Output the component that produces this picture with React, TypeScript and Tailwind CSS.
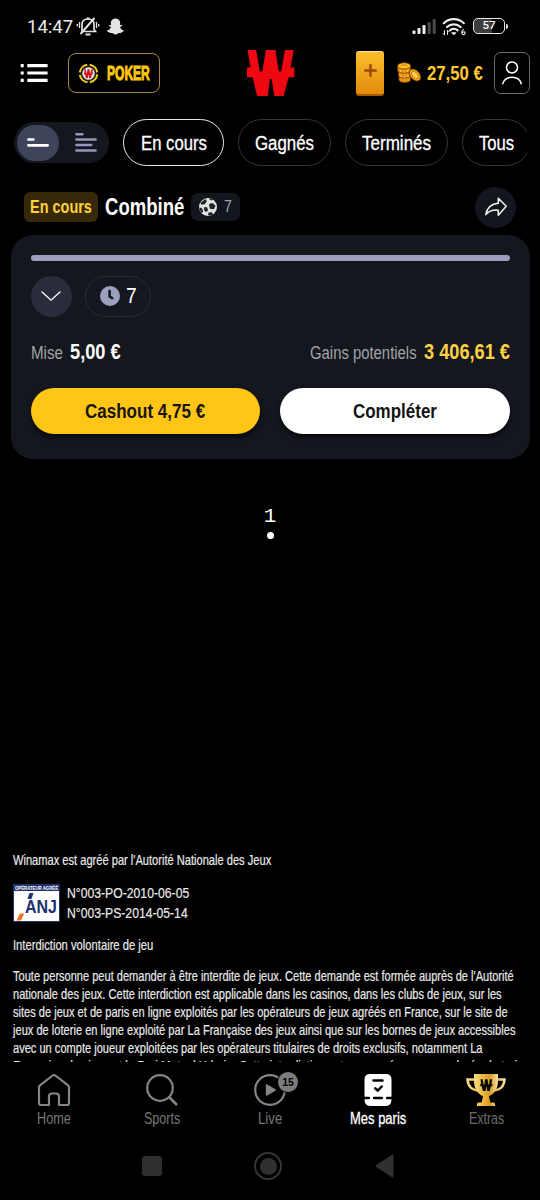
import { useLayoutEffect, useRef, useState } from 'react';
import clsx from 'clsx';
import { FaSnapchatGhost } from 'react-icons/fa';

type CondensedProps = {
  width: number;
  className?: string;
  children: string;
};

// Condensed text: squeezes a regular face horizontally into the given width
function Condensed({ width, className, children }: CondensedProps) {
  const ref = useRef<HTMLSpanElement>(null);
  const [scale, setScale] = useState(0.82);

  useLayoutEffect(() => {
    if (ref.current) setScale(width / ref.current.offsetWidth);
  }, [width, children]);

  return (
    <span className={clsx('block shrink-0 whitespace-nowrap', className)} style={{ width }}>
      <span
        ref={ref}
        className="inline-block origin-left"
        style={{ transform: `scaleX(${scale})` }}
      >
        {children}
      </span>
    </span>
  );
}

const W_PATH =
  'M.5 0H9.2L12.800 21.500H15.400L18.800 0H28.400L31.800 21.500H34.200L38 0H46.700L43.500 17.500H47.300V27.200H41.600L36.700 46H27.300L24.600 29H23L20.700 46H10L5.700 27.200H0V17.500H3.500Z';

function StatusBar() {
  return (
    <div className="flex h-[46px] items-start pt-[14px] pr-[32px] pl-[27px]">
      <Condensed
        width={46}
        className="font-[Roboto,sans-serif] text-[18.5px] leading-[26px] text-[#ececec]"
      >
        14:47
      </Condensed>
      <svg className="mt-[2px] ml-[3px]" width="24" height="21" viewBox="0 0 24 21" fill="none" stroke="#e4e4e4" strokeWidth="1.7">
        <path d="M6 15.5V8.5C6 5 8.2 3 12 3s6 2 6 5.500v5l1.500 2H5" />
        <path d="M10.500 2.500h3M9.500 18.500h5M4.500 18 18.500 2" strokeWidth="1.900" />
        <path d="M3.500 6v6M1.300 8v2.500M20.500 6v6M22.700 8v2.500" strokeWidth="1.300" />
      </svg>
      <FaSnapchatGhost className="mt-[4px] ml-[7px] text-[#e4e4e4]" size={17} />
      <svg className="mt-[4px] ml-auto" width="24" height="17" viewBox="0 0 24 17">
        <rect x="0.500" y="12.500" width="3" height="3.500" rx=".8" fill="#ececec" />
        <rect x="5.500" y="10" width="3" height="6" rx=".8" fill="#ececec" />
        <rect x="10.500" y="7" width="3" height="9" rx=".8" fill="#ececec" />
        <rect x="15.700" y="4" width="3" height="12" rx=".8" fill="#4a4a4a" />
        <rect x="20.700" y="1" width="3" height="15" rx=".8" fill="#4a4a4a" />
      </svg>
      <svg className="mt-[3px] ml-[6px]" width="24" height="19" viewBox="0 0 24 19" fill="none" stroke="#ececec" strokeLinecap="round">
        <path d="M1.800 6.200a14.500 14.500 0 0 1 20 0M5 10a10 10 0 0 1 13.600 0M8 13.300a5.800 5.800 0 0 1 7.600 0" strokeWidth="2.200" />
        <path d="m10 16 1.800 1.800L13.600 16Z" fill="#ececec" strokeWidth="1" />
        <path d="M2.500 13.500v4M1.200 16.500l1.300 1.300M5.500 17.500v-4M6.700 14.800l-1.200-1.300" strokeWidth="1" />
        <path d="M21.500 12.500c-2 .8-2.500 4.500-.5 5s3-2.500 1-2.700c-1 0-1.800.5-2 1.200" strokeWidth="1.100" />
      </svg>
      <div className="mt-[4px] ml-[7px] flex h-4 w-8 items-center justify-center rounded-[5px] border-[1.500px] border-[#e8e8e8] bg-linear-to-r from-[#3c3c3c] from-58% to-black to-60%">
        <span className="font-[Roboto,sans-serif] text-[11.500px] leading-none font-medium text-white">57</span>
      </div>
      <div className="mt-[10px] ml-px h-[5px] w-[2px] rounded-r bg-[#e8e8e8]" />
    </div>
  );
}

function Coins() {
  return (
    <svg className="ml-[13px] shrink-0" width="25" height="22" viewBox="0 0 25 22" stroke="#7a3d00" strokeWidth=".8">
      <g fill="#e69613">
        <path d="M2 14v4c0 3.300 11.500 3.300 11.500 0v-4" />
        <path d="M1.500 9v4.500c0 3.300 12 3.300 12 0V9" />
        <path d="M.7 4v4.500c0 3.500 12.800 3.500 12.800 0V4" />
        <ellipse cx="7.200" cy="3.900" rx="6.500" ry="3.100" fill="#ffc22e" />
        <path d="M12 10c-1 3 5 9.500 8.500 9l3-2" />
        <ellipse cx="18" cy="13" rx="6.800" ry="4.500" transform="rotate(48 18 13)" fill="#f9b120" />
        <ellipse cx="18" cy="13" rx="4.500" ry="2.600" transform="rotate(48 18 13)" fill="#ffd050" stroke="#b86600" />
      </g>
      <path d="M3.500 8v2.200M7 8.800V11M10.500 8v2.200M4 13v2.200M7.500 13.600v2.200M11 12.800V15" stroke="#fdd36a" />
      <path d="M4 4c2-1.500 4.500-1.500 6.500 0" stroke="#b86600" fill="none" />
    </svg>
  );
}

function Header() {
  return (
    <header className="flex h-[54px] items-center pr-[10px] pl-5">
      <svg width="28" height="20" viewBox="0 0 28 20" fill="#fff">
        <path d="M.7 1h3v3.200h-3zM7.300 1h20.300v3.200H7.300zM.7 8.400h3v3.200h-3zM7.300 8.400h20.300v3.200H7.300zM.7 15.800h3V19h-3zM7.300 15.800h20.300V19H7.300z" />
      </svg>
      <button className="ml-5 flex h-10 w-[92px] items-center rounded-lg border border-[#a5873f] pl-[9px]">
        <svg className="shrink-0" width="21" height="21" viewBox="0 0 21 21">
          <circle cx="10.500" cy="10.500" r="8.800" fill="#181818" stroke="#f5d21c" strokeWidth="2" strokeDasharray="11.300 2.500" strokeDashoffset="-1" />
          <circle cx="10.500" cy="10.500" r="6.300" fill="#e6dedd" />
          <path d={W_PATH} fill="#d3131b" transform="translate(6 6.200) scale(.19)" />
        </svg>
        <Condensed
          width={43}
          className="ml-[8px] text-[21px] leading-6 font-bold text-[#fdc70d] [-webkit-text-stroke:1.1px_#fdc70d]"
        >
          POKER
        </Condensed>
      </button>
      <svg className="ml-[87px] shrink-0" width="48" height="46" viewBox="0 0 48 46" fill="#ed0812">
        <path d={W_PATH} />
      </svg>
      <div className="ml-[61px] flex h-[45px] w-7 shrink-0 items-center justify-center rounded-[3px] border-t border-b-2 border-t-[#ffe28a] border-b-[#a55a00] bg-linear-to-b from-[#fdbe2c] to-[#e28a0a]">
        <svg className="-mt-1" width="13" height="13" viewBox="0 0 13 13" stroke="#9c4a08" strokeWidth="2.400">
          <path d="M6.500 .2v12.600M.2 6.500h12.600" />
        </svg>
      </div>
      <Coins />
      <Condensed width={56} className="ml-[5px] text-[20px] leading-6 font-bold text-[#ffc92e]">
        27,50 €
      </Condensed>
      <button className="ml-[11px] flex h-[42px] w-9 shrink-0 items-center justify-center rounded-[7px] border border-[#6a6a6c]">
        <svg width="22" height="26" viewBox="0 0 22 26" fill="none" stroke="#fff" strokeWidth="1.500">
          <circle cx="11" cy="7.500" r="5.500" />
          <path d="M1.500 24.200C3 19 7 17.300 11 17.300s8 1.700 9.500 6.900" />
        </svg>
      </button>
    </header>
  );
}

const tabs = [
  { label: 'En cours', text: 66, box: 'w-[101px]', active: true },
  { label: 'Gagnés', text: 59, box: 'w-[93px]' },
  { label: 'Terminés', text: 69, box: 'w-[103px]' },
  { label: 'Tous', text: 35, box: 'w-[68px]' }
];

function Filters() {
  return (
    <div className="mt-[19px] mr-[13px] ml-[14px] flex h-[47px] items-center gap-[14px] overflow-hidden">
      <div className="flex h-[41px] w-[95px] shrink-0 items-center rounded-full bg-[#15171f] pl-[3px]">
        <div className="flex h-9 w-[42px] items-center justify-center rounded-full bg-[#3e445a]">
          <svg width="22" height="9" viewBox="0 0 22 9" stroke="#fff" strokeWidth="2.700" strokeLinecap="round">
            <path d="M1.400 1.500h5M1.400 7.300h19.200" />
          </svg>
        </div>
        <svg className="ml-4" width="22" height="19" viewBox="0 0 22 19" stroke="#9596bc" strokeWidth="2.500" strokeLinecap="round">
          <path d="M1.400 1.300h6M1.400 6.600h19.200M1.400 12h14.800M1.400 17.400h19.200" />
        </svg>
      </div>
      {tabs.map((tab) => (
        <button
          key={tab.label}
          className={clsx(
            'flex h-[47px] shrink-0 items-center justify-center rounded-full border',
            tab.box,
            tab.active ? 'border-[#e8e8e8]' : 'border-[#343437]'
          )}
        >
          <Condensed width={tab.text} className="text-[20px] leading-6 text-white [-webkit-text-stroke:0.3px_#fff]">
            {tab.label}
          </Condensed>
        </button>
      ))}
    </div>
  );
}

function Football() {
  return (
    <svg width="18" height="18" viewBox="0 0 18 18">
      <circle cx="9" cy="9" r="9" fill="#e3e5e3" />
      <g fill="#20252a">
        <path d="m10 6 3.800-1 2.700 2.700-1.500 3.600-4.200-.6ZM1.500 4.700 6.500 1l1.300 2.300-2 3-3.500.5ZM.2 9.500l2.500.5 1.600 3.200-1.500 2Q.4 12.500.2 9.500ZM5.500 9l2.500.3 1.200 3-2.200 2-2.300-2.500ZM9.500 14.500l3.500-.3 1.200 2-3 1.500-2.200-.7ZM11 .3l3 1.300-1.600 1-2-1Z" />
      </g>
    </svg>
  );
}

function BetTitle() {
  return (
    <div className="mt-5 flex h-[42px] items-center pr-6 pl-6">
      <div className="flex h-[30px] w-[74px] items-center justify-center rounded-[6px] bg-[#362808]">
        <Condensed width={62} className="text-[17.500px] leading-5 font-bold text-[#ffd13d]">
          En cours
        </Condensed>
      </div>
      <Condensed width={79} className="ml-[7px] text-[23px] leading-7 font-bold text-white">
        Combiné
      </Condensed>
      <div className="ml-[7px] flex h-7 w-[49px] items-center rounded-[7px] bg-[#14161e] pl-[8px]">
        <Football />
        <Condensed width={7.500} className="ml-[7px] text-[17px] leading-5 text-[#a3a3a8]">
          7
        </Condensed>
      </div>
      <button className="ml-auto flex size-[41px] items-center justify-center rounded-full bg-[#14161e]">
        <svg width="24" height="22" viewBox="0 0 24 22" fill="none" stroke="#f4f4f4" strokeWidth="1.500" strokeLinejoin="round">
          <path d="M14.300 2.200 22.200 10.300 14.300 19.300V14.200C8.800 13.700 4.800 15 1.800 18.600 3 11.500 7.200 7.800 14.300 7.200Z" />
        </svg>
      </button>
    </div>
  );
}

function BetCard() {
  return (
    <section className="mt-[7px] mr-[10px] ml-[10.500px] h-[224px] shrink-0 rounded-[22px] bg-[#15171f] px-5 pt-5">
      <div className="h-[6px] rounded-full bg-[#9c9fbd]" />
      <div className="mt-[14px] flex h-[42px] items-center gap-[13px]">
        <button className="flex size-[41px] items-center justify-center rounded-full bg-[#292d3b]">
          <svg width="20" height="12" viewBox="0 0 20 12" fill="none" stroke="#fff" strokeWidth="1.300" strokeLinecap="round">
            <path d="m1 2 9 8.200L19 2" />
          </svg>
        </button>
        <div className="flex h-[41px] w-[66px] items-center rounded-full border border-[#292b33] pl-[14px]">
          <svg width="20" height="20" viewBox="0 0 20 20" fill="none">
            <circle cx="10" cy="10" r="10" fill="#9c9fbd" />
            <path d="M9.600 5v5.500l2.600 1.600" stroke="#15171f" strokeWidth="2.600" strokeLinecap="round" strokeLinejoin="round" />
          </svg>
          <Condensed width={10.500} className="ml-[6px] text-[22px] leading-6 text-white">
            7
          </Condensed>
        </div>
      </div>
      <div className="mt-[21px] flex h-7 items-baseline justify-between">
        <div className="flex items-baseline gap-[7px]">
          <Condensed width={32} className="text-[17.500px] leading-7 text-[#a2a2a7]">
            Mise
          </Condensed>
          <Condensed width={50.500} className="text-[22px] leading-7 font-bold text-white">
            5,00 €
          </Condensed>
        </div>
        <div className="flex items-baseline gap-[7px]">
          <Condensed width={107} className="text-[17.500px] leading-7 text-[#a2a2a7]">
            Gains potentiels
          </Condensed>
          <Condensed width={86} className="text-[22px] leading-7 font-bold text-[#ffd147]">
            3 406,61 €
          </Condensed>
        </div>
      </div>
      <div className="mt-[22px] grid grid-cols-2 gap-5">
        <button className="flex h-[46px] items-center justify-center rounded-full bg-[#ffc517] shadow-md shadow-black/60">
          <Condensed width={120} className="text-[20px] leading-6 font-bold text-[#151515]">
            Cashout 4,75 €
          </Condensed>
        </button>
        <button className="flex h-[46px] items-center justify-center rounded-full bg-white shadow-md shadow-black/60">
          <Condensed width={84} className="text-[20px] leading-6 font-bold text-[#151515]">
            Compléter
          </Condensed>
        </button>
      </div>
    </section>
  );
}

const legalLines = [
  { width: 500.500, text: "Toute personne peut demander à être interdite de jeux. Cette demande est formée auprès de l'Autorité" },
  { width: 488.500, text: 'nationale des jeux. Cette interdiction est applicable dans les casinos, dans les clubs de jeux, sur les' },
  { width: 494.500, text: 'sites de jeux et de paris en ligne exploités par les opérateurs de jeux agréés en France, sur le site de' },
  { width: 502.500, text: 'jeux de loterie en ligne exploité par La Française des jeux ainsi que sur les bornes de jeux accessibles' },
  { width: 469.500, text: 'avec un compte joueur exploitées par les opérateurs titulaires de droits exclusifs, notamment La' },
  { width: 510, text: 'Française des jeux et le Pari Mutuel Urbain. Cette interdiction est prononcée pour une durée de trois' }
];

function Legal() {
  return (
    <section className="mt-auto h-[212px] shrink-0 overflow-hidden pt-px pl-[13px] text-[14.500px] leading-[18px] text-[#e9e9e9] [-webkit-text-stroke:0.2px_#e9e9e9]">
      <Condensed width={258}>Winamax est agréé par l'Autorité Nationale des Jeux</Condensed>
      <div className="mt-[14px] flex h-[40px] items-center">
        <div className="flex h-[38px] w-[47px] flex-col border border-[#20336e] bg-white [-webkit-text-stroke:0]">
          <div className="flex h-[6px] items-center justify-center bg-[#20336e]">
            <Condensed width={43} className="text-[5px] leading-[6px] font-bold text-white">
              OPÉRATEUR AGRÉÉ
            </Condensed>
          </div>
          <div className="flex h-[30px] items-end pl-[2px]">
            <svg width="9" height="28" viewBox="0 0 9 28">
              <path d="M3.700 20.500h4.500L5 27.500H.5Z" fill="#e97529" />
            </svg>
            <div className="flex flex-col">
              <svg className="ml-[2px]" width="7" height="7" viewBox="0 0 7 7">
                <path d="M2.500 0H6.500L4.500 6H.5Z" fill="#20336e" />
              </svg>
              <Condensed width={32} className="mb-[6px] text-[18px] leading-[15px] font-bold text-[#20336e]">
                ANJ
              </Condensed>
            </div>
          </div>
        </div>
        <div className="ml-[7px] text-[15px] leading-5">
          <Condensed width={122}>N°003-PO-2010-06-05</Condensed>
          <Condensed width={121}>N°003-PS-2014-05-14</Condensed>
        </div>
      </div>
      <Condensed width={140} className="mt-[13px]">
        Interdiction volontaire de jeu
      </Condensed>
      <div className="mt-[13px]">
        {legalLines.map((line) => (
          <Condensed key={line.text} width={line.width}>
            {line.text}
          </Condensed>
        ))}
      </div>
    </section>
  );
}

function HomeIcon() {
  return (
    <svg width="34" height="34" viewBox="0 0 34 34" fill="none" stroke="#858585" strokeWidth="2.200" strokeLinejoin="round">
      <path d="M2 14 Q2 13 3 12.300L15.600 2.500Q17 1.500 18.400 2.500L31 12.300Q32 13 32 14V30Q32 32 30 32H22V23.500Q22 20.500 19 20.500H15Q12 20.500 12 23.500V32H4Q2 32 2 30Z" />
    </svg>
  );
}

function SearchIcon() {
  return (
    <svg width="34" height="34" viewBox="0 0 34 34" fill="none" stroke="#858585" strokeWidth="2.200">
      <circle cx="15" cy="15" r="12.800" />
      <path d="m24 24 8 8" strokeWidth="2.700" />
    </svg>
  );
}

function LiveIcon() {
  return (
    <div className="relative">
      <svg width="34" height="34" viewBox="0 0 34 34">
        <circle cx="17" cy="17" r="14.800" fill="none" stroke="#858585" strokeWidth="2.200" />
        <path d="M12.800 12.500Q12.800 10.800 14.300 11.600L22.500 16.200Q23.800 17 22.500 17.800L14.300 22.400Q12.800 23.200 12.800 21.500Z" fill="#858585" />
      </svg>
      <span className="absolute -top-[2px] left-[24px] flex size-[22px] items-center justify-center rounded-full border border-black bg-[#7c7c7c] text-[10.500px] leading-none font-bold text-black">
        15
      </span>
    </div>
  );
}

function TicketIcon() {
  return (
    <svg width="34" height="34" viewBox="0 0 34 34" fill="none">
      <path d="M9 1H25Q30.500 1 30.500 6.500V23.300Q29 25 30.500 26.500Q30.500 33 25 33H9Q3.500 33 3.500 26.500Q5 25 3.500 23.300V6.500Q3.500 1 9 1Z" fill="#fff" />
      <path d="M12.500 7.500h9M14.300 15.300l2.400 2.400 4-4.200" stroke="#000" strokeWidth="2.500" strokeLinecap="round" strokeLinejoin="round" />
      <path d="M3 25H8M13 25h8M26 25h5" stroke="#000" strokeWidth="2.300" strokeLinecap="round" />
    </svg>
  );
}

function TrophyIcon() {
  return (
    <svg width="40" height="34" viewBox="0 0 40 34">
      <defs>
        <linearGradient id="gold" x1="0" y1="0" x2="1" y2="0">
          <stop offset="0" stopColor="#f8da8c" />
          <stop offset=".35" stopColor="#eebb42" />
          <stop offset=".65" stopColor="#d99b22" />
          <stop offset="1" stopColor="#f9dfa0" />
        </linearGradient>
      </defs>
      <path d="M9 6.500H1.500C2 14 6 17 12.500 17.500M31 6.500h7.500C38 14 34 17 27.500 17.500" fill="none" stroke="url(#gold)" strokeWidth="2.500" />
      <path d="M8 1H32V8C32 16 28 21 23 23.300L24.300 29.500H27.500Q29 29.500 29 31V33H11V31Q11 29.500 12.500 29.500H15.700L17 23.300C12 21 8 16 8 8Z" fill="url(#gold)" />
      <path d={W_PATH} fill="#090909" transform="translate(14.300 6.300) scale(.255)" />
    </svg>
  );
}

const navItems = [
  { label: 'Home', width: 34, color: 'text-[#777]', icon: <HomeIcon /> },
  { label: 'Sports', width: 36, color: 'text-[#777]', icon: <SearchIcon /> },
  { label: 'Live', width: 24, color: 'text-[#777]', icon: <LiveIcon /> },
  { label: 'Mes paris', width: 56, color: 'text-white [-webkit-text-stroke:0.3px_#fff]', icon: <TicketIcon /> },
  { label: 'Extras', width: 35, color: 'text-[#6c6f68]', icon: <TrophyIcon /> }
];

function BottomNav() {
  return (
    <nav className="grid h-[74px] shrink-0 grid-cols-5 bg-black pt-[11px]">
      {navItems.map((item) => (
        <a key={item.label} className="flex flex-col items-center">
          {item.icon}
          <Condensed width={item.width} className={clsx('mt-[3px] text-[16px] leading-[18px]', item.color)}>
            {item.label}
          </Condensed>
        </a>
      ))}
    </nav>
  );
}

function SystemNav() {
  return (
    <div className="flex h-16 shrink-0 items-center pl-[142px]">
      <div className="-mt-1 size-5 rounded-[3px] bg-[#2f2f2f]" />
      <div className="-mt-1 ml-[92px] flex size-7 items-center justify-center rounded-full border-2 border-[#343434]">
        <div className="size-[17px] rounded-full bg-[#303030]" />
      </div>
      <svg className="-mt-1 ml-[93px]" width="19" height="24" viewBox="0 0 19 24" fill="#303030">
        <path d="M17 .8Q18.500 0 18.500 1.500V22.500Q18.500 24 17 23.200L.8 12.700Q0 12 .8 11.300Z" />
      </svg>
    </div>
  );
}

export default function App() {
  return (
    <main className="flex h-[1200px] w-[540px] flex-col overflow-hidden bg-black font-['Liberation_Sans_Narrow','Liberation_Sans',Arial,sans-serif]">
      <StatusBar />
      <Header />
      <Filters />
      <BetTitle />
      <BetCard />
      <div className="mt-[46px] flex flex-col items-center">
        <span className="font-['Liberation_Mono',monospace] text-[21px] leading-6 text-white">1</span>
        <span className="mt-[3px] size-[7px] rounded-full bg-white" />
      </div>
      <Legal />
      <BottomNav />
      <SystemNav />
    </main>
  );
}
